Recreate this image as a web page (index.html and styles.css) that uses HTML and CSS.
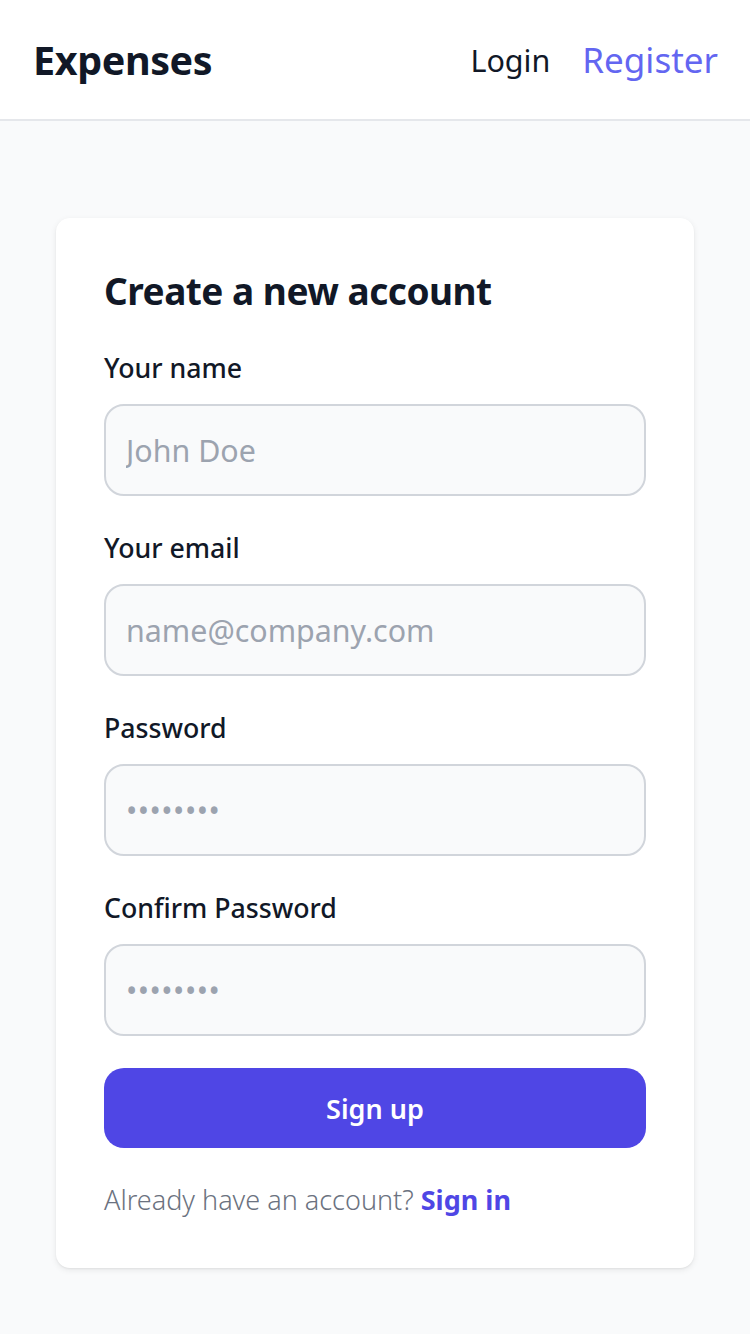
FILE: index.html
```html
<!DOCTYPE html>
<html lang="en">
<head>
<meta charset="utf-8">
<title>Expenses - Register</title>
<link rel="stylesheet" href="styles.css">
</head>
<body>
<header class="topbar">
  <a class="brand" href="#">Expenses</a>
  <nav class="nav">
    <a class="nav-link" href="#">Login</a>
    <a class="nav-link nav-link-active" href="#">Register</a>
  </nav>
</header>
<main class="page">
  <section class="card">
    <h1 class="title">Create a new account</h1>
    <form class="form">
      <div class="field">
        <label class="label" for="name">Your name</label>
        <input class="input" id="name" type="text" placeholder="John Doe">
      </div>
      <div class="field">
        <label class="label" for="email">Your email</label>
        <input class="input" id="email" type="email" placeholder="name@company.com">
      </div>
      <div class="field">
        <label class="label" for="pw">Password</label>
        <input class="input input-pw" id="pw" type="password" placeholder="••••••••">
      </div>
      <div class="field">
        <label class="label" for="pw2">Confirm Password</label>
        <input class="input input-pw" id="pw2" type="password" placeholder="••••••••">
      </div>
      <button class="btn" type="button">Sign up</button>
      <p class="foot">Already have an account? <a class="foot-link" href="#">Sign in</a></p>
    </form>
  </section>
</main>
</body>
</html>
```
FILE: styles.css
```css
* { box-sizing: border-box; }
html, body { margin: 0; padding: 0; }
body {
  font-family: "Noto Sans", "Open Sans", sans-serif;
  background: #f9fafb;
  color: #111827;
  min-height: 1334px;
}
a { text-decoration: none; }

.topbar {
  height: 121px;
  background: #fff;
  border-bottom: 2px solid #e5e7eb;
  display: flex;
  align-items: center;
  justify-content: space-between;
  padding: 0 32px 0 33px;
}
.brand {
  font-size: 39.5px;
  font-weight: 700;
  color: #111827;
  letter-spacing: -0.4px;
}
.nav { display: flex; align-items: center; gap: 32px; }
.nav-link { font-size: 30.5px; color: #111827; }
.nav-link-active { color: #6366f1; font-size: 35px; }

.page {
  padding: 97px 56px 66px;
}
.card {
  background: #fff;
  border-radius: 14px;
  box-shadow: 0 2px 6px rgba(0,0,0,0.08), 0 1px 2px rgba(0,0,0,0.05);
  padding: 48px;
}
.title {
  margin: 0 0 32px;
  font-size: 37px;
  line-height: 50px;
  font-weight: 700;
  letter-spacing: -0.5px;
  color: #111827;
}
.form { display: flex; flex-direction: column; gap: 32px; }
.field { display: flex; flex-direction: column; }
.label {
  font-size: 26.7px;
  line-height: 40px;
  font-weight: 500;
  margin-bottom: 16px;
  color: #111827;
}
.input {
  height: 92px;
  border: 2px solid #d1d5db;
  border-radius: 20px;
  background: #f9fafb;
  padding: 0 20px;
  font-family: inherit;
  font-size: 30.4px;
  color: #111827;
  outline: none;
  width: 100%;
}
.input::placeholder { color: #9ca3af; }
.input-pw::placeholder { font-size: 30px; letter-spacing: 0.5px; }
.btn {
  height: 80px;
  border: 0;
  border-radius: 20px;
  background: #4f46e5;
  color: #fff;
  font-family: inherit;
  font-size: 27px;
  font-weight: 600;
  width: 100%;
}
.foot {
  margin: 0;
  font-size: 27px;
  line-height: 40px;
  font-weight: 300;
  color: #6b7280;
}
.foot-link { color: #4f46e5; font-weight: 700; }
```
